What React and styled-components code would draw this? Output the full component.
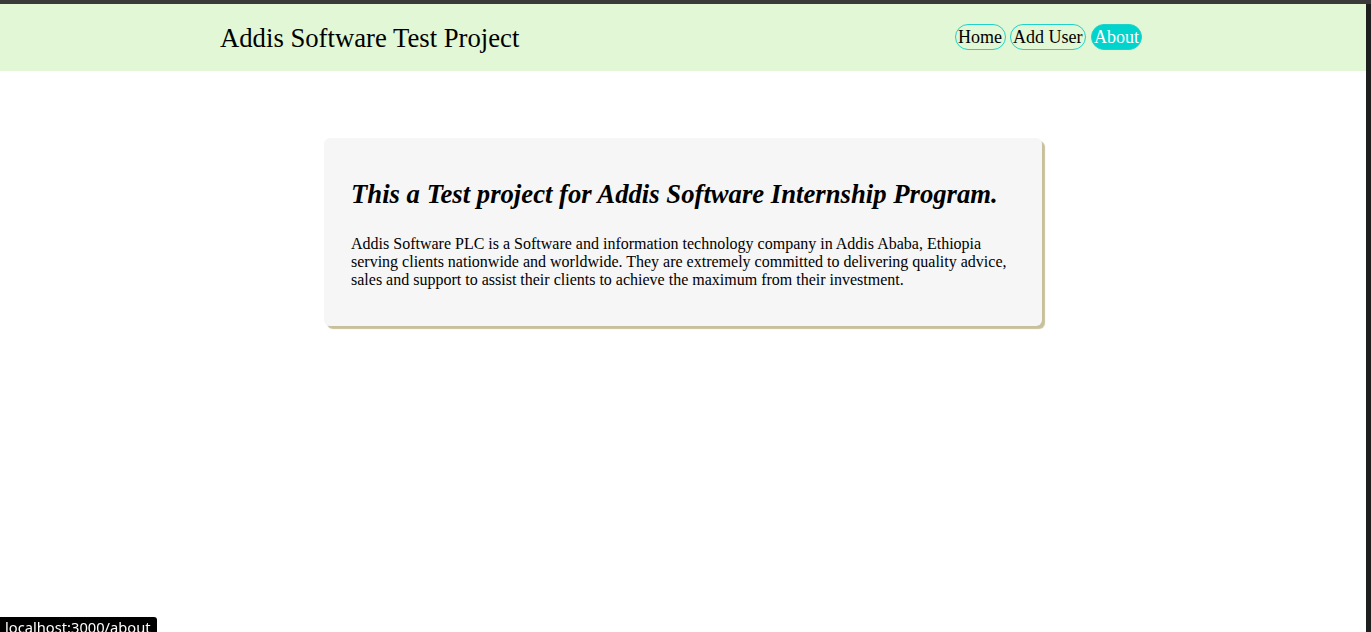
import React from "react";
import styled, { createGlobalStyle } from "styled-components";

const GlobalStyle = createGlobalStyle`
  html, body {
    margin: 0;
    padding: 0;
    height: 100%;
    overflow: hidden;
  }
  body {
    font-family: "Liberation Serif", "Times New Roman", serif;
    color: #000;
  }
`;

const Window = styled.div`
  display: flex;
  flex-direction: column;
  height: 100vh;
  background: #3a3a3a;
`;

const TopEdge = styled.div`
  height: 4px;
  flex-shrink: 0;
`;

const Viewport = styled.div`
  display: flex;
  flex: 1;
  min-height: 0;
`;

const Page = styled.main`
  flex: 1;
  background: #ffffff;
`;

const Gutter = styled.div`
  width: 5px;
  background: #1e1e1e;
`;

const StyledHeader = styled.header`
  display: flex;
  align-items: center;
  justify-content: space-between;
  height: 67px;
  padding: 0 224px 0 220px;
  background: #e1f7d5;
`;

const Title = styled.h1`
  margin: 0;
  font-size: 26.7px;
  font-weight: 400;
  line-height: 30px;
`;

const Nav = styled.nav`
  display: flex;
  align-items: center;
  gap: 4px;
  margin-top: -2px;
`;

const NavLink = styled.a`
  display: inline-block;
  padding: 2px ${(props) => (props.active ? "2px" : "2.5px")};
  margin-left: ${(props) => (props.active ? "1px" : "0")};
  border: 1px solid #1fd3c8;
  border-radius: 14px;
  font-size: 18px;
  line-height: 20px;
  color: ${(props) => (props.active ? "#ffffff" : "#000000")};
  background: ${(props) => (props.active ? "#00d4cc" : "transparent")};
  text-decoration: none;
  cursor: pointer;
`;

const Card = styled.section`
  box-sizing: border-box;
  width: 718px;
  margin: 67px auto 0;
  padding: 41px 26px 37px 27px;
  background: #f6f6f6;
  border-radius: 6px;
  box-shadow: 3px 3px 1px #c8c09b;
`;

const CardTitle = styled.h2`
  margin: 0 0 26px;
  font-size: 26.7px;
  font-style: italic;
  font-weight: 700;
  line-height: 30px;
`;

const CardText = styled.p`
  margin: 0;
  font-size: 16px;
  line-height: 18px;
`;

const StatusTip = styled.div`
  position: fixed;
  left: 0;
  bottom: 0;
  box-sizing: border-box;
  height: 15px;
  overflow: hidden;
  padding: 1px 6px 0 5px;
  background: #000;
  color: #fff;
  font-family: "Noto Sans", "DejaVu Sans", sans-serif;
  font-size: 14.7px;
  line-height: 18px;
  border-top-right-radius: 3px;
`;

const links = [
  { label: "Home", active: false },
  { label: "Add User", active: false },
  { label: "About", active: true },
];

const App = () => {
  return (
    <>
      <GlobalStyle />
      <Window>
        <TopEdge />
        <Viewport>
          <Page>
            <StyledHeader>
              <Title>Addis Software Test Project</Title>
              <Nav>
                {links.map((link) => (
                  <NavLink key={link.label} active={link.active}>
                    {link.label}
                  </NavLink>
                ))}
              </Nav>
            </StyledHeader>
            <Card>
              <CardTitle>
                This a Test project for Addis Software Internship Program.
              </CardTitle>
              <CardText>
                Addis Software PLC is a Software and information technology
                company in Addis Ababa, Ethiopia serving clients nationwide and
                worldwide. They are extremely committed to delivering quality
                advice, sales and support to assist their clients to achieve the
                maximum from their investment.
              </CardText>
            </Card>
          </Page>
          <Gutter />
        </Viewport>
      </Window>
      <StatusTip>localhost:3000/about</StatusTip>
    </>
  );
};

export default App;
